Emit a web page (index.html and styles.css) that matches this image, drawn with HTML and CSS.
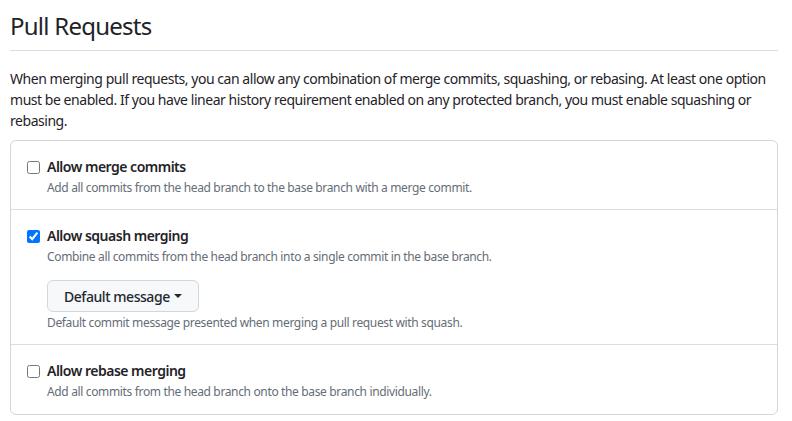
FILE: index.html
```html
<!DOCTYPE html>
<html>
<head>
<meta charset="utf-8">
<link rel="stylesheet" href="styles.css">
</head>
<body>
<div class="page">
  <h2 class="title">Pull Requests</h2>
  <p class="intro">When merging pull requests, you can allow any combination of merge commits, squashing, or rebasing. At least one option must be enabled. If you have linear history requirement enabled on any protected branch, you must enable squashing or rebasing.</p>
  <div class="box">
    <div class="row">
      <label class="opt"><input type="checkbox" class="cb"><span class="label">Allow merge commits</span></label>
      <p class="note">Add all commits from the head branch to the base branch with a merge commit.</p>
    </div>
    <div class="row">
      <label class="opt"><input type="checkbox" class="cb" checked><span class="label">Allow squash merging</span></label>
      <p class="note">Combine all commits from the head branch into a single commit in the base branch.</p>
      <button class="btn">Default message <span class="caret"></span></button>
      <p class="note">Default commit message presented when merging a pull request with squash.</p>
    </div>
    <div class="row last">
      <label class="opt"><input type="checkbox" class="cb"><span class="label">Allow rebase merging</span></label>
      <p class="note">Add all commits from the head branch onto the base branch individually.</p>
    </div>
  </div>
</div>
</body>
</html>
```
FILE: styles.css
```css
* { box-sizing: border-box; }
body {
  margin: 0;
  background: #fff;
  font-family: "Noto Sans", "Open Sans", sans-serif;
  color: #1f2328;
}
.page {
  padding: 10px 14px 0 10px;
}
.title {
  margin: 0;
  font-size: 24px;
  font-weight: 400;
  line-height: 32px;
  letter-spacing: -0.75px;
  padding-bottom: 8px;
  border-bottom: 1px solid #d8dee4;
}
.intro {
  margin: 17px 0 9px;
  font-size: 14px;
  line-height: 21px;
  letter-spacing: -0.46px;
}
.box {
  border: 1px solid #d0d7de;
  border-radius: 6px;
}
.row {
  padding: 16px 16px 12px 16px;
  border-bottom: 1px solid #d8dee4;
}
.row.last { border-bottom: 0; padding-bottom: 13px; }
.opt {
  display: flex;
  align-items: center;
  gap: 7px;
}
.cb {
  margin: 0;
  width: 13px;
  height: 13px;
}
.label {
  font-size: 14px;
  font-weight: 600;
  line-height: 20px;
  letter-spacing: -0.5px;
}
.note {
  margin: 2px 0 0 20px;
  font-size: 12px;
  line-height: 18px;
  letter-spacing: -0.35px;
  color: #656d76;
}
.btn {
  margin: 14px 0 0 20px;
  height: 32px;
  padding: 0 16px;
  font-family: inherit;
  font-size: 14px;
  font-weight: 500;
  letter-spacing: -0.45px;
  color: #24292f;
  background: #f6f8fa;
  border: 1px solid #d0d7de;
  border-radius: 6px;
  display: inline-flex;
  align-items: center;
  gap: 4px;
}
.caret {
  display: inline-block;
  width: 0;
  height: 0;
  border-left: 4px solid transparent;
  border-right: 4px solid transparent;
  border-top: 4px solid #24292f;
}
```
